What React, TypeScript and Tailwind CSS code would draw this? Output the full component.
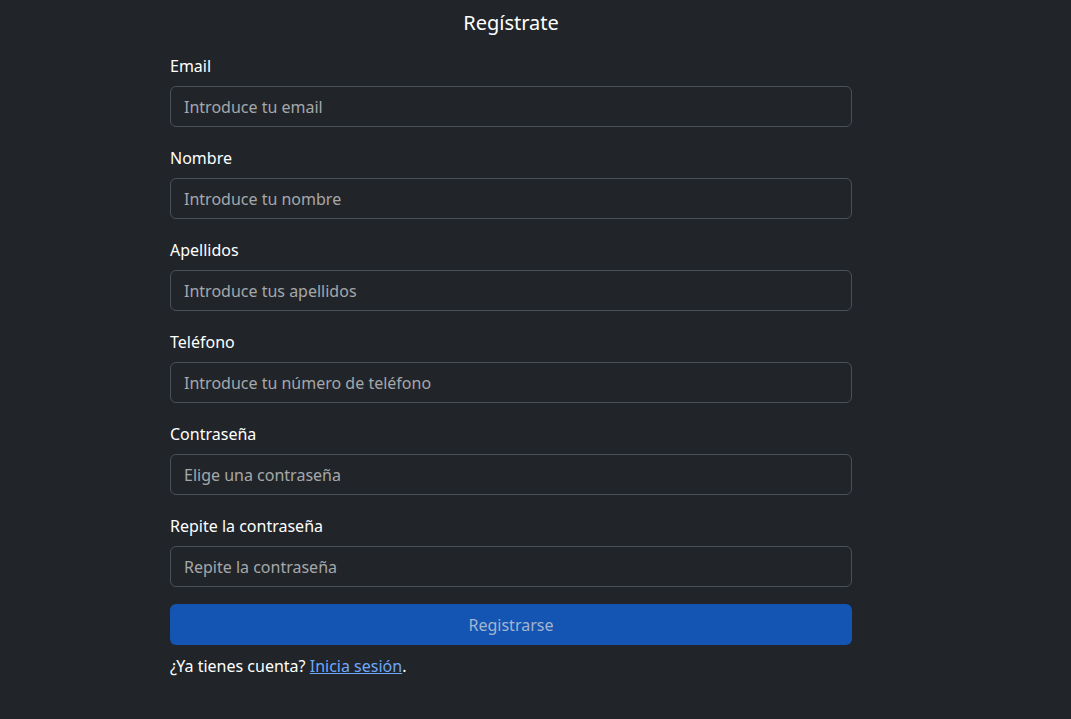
import { useState } from 'react'

const fields = [
  { id: 'email', label: 'Email', type: 'email', placeholder: 'Introduce tu email' },
  { id: 'nombre', label: 'Nombre', type: 'text', placeholder: 'Introduce tu nombre' },
  { id: 'apellidos', label: 'Apellidos', type: 'text', placeholder: 'Introduce tus apellidos' },
  { id: 'telefono', label: 'Teléfono', type: 'tel', placeholder: 'Introduce tu número de teléfono' },
  { id: 'password', label: 'Contraseña', type: 'password', placeholder: 'Elige una contraseña' },
  { id: 'password2', label: 'Repite la contraseña', type: 'password', placeholder: 'Repite la contraseña' },
]

export default function App() {
  const [values, setValues] = useState<Record<string, string>>({})
  const filled = fields.every((f) => values[f.id])

  return (
    <div
      className="min-h-screen bg-[#212529] text-[#f8f9fa]"
      style={{ fontFamily: '"Noto Sans", "Open Sans", sans-serif' }}
    >
      <div className="ml-[170px] w-[682px] pt-[8px]">
        <h2 className="text-center text-[20px] leading-[30px] text-white">Regístrate</h2>

        <form className="mt-[16px]" onSubmit={(e) => e.preventDefault()}>
          {fields.map((f) => (
            <div key={f.id} className="mb-[19px]">
              <label htmlFor={f.id} className="block text-[16px] leading-[24px] mb-[8px] text-white">
                {f.label}
              </label>
              <input
                id={f.id}
                type={f.type}
                placeholder={f.placeholder}
                value={values[f.id] ?? ''}
                onChange={(e) => setValues({ ...values, [f.id]: e.target.value })}
                className="block w-full h-[41px] rounded-[6px] border border-[#495057] bg-[#212529] px-[13px] text-[16px] text-[#dee2e6] placeholder:text-[#a5a8ab] focus:outline-none"
              />
            </div>
          ))}

          <button
            type="submit"
            disabled={!filled}
            className="-mt-[2px] block w-full h-[41px] rounded-[6px] bg-[#1454b2] text-[16px] text-[#a3b5cf] disabled:cursor-default"
          >
            Registrarse
          </button>
        </form>

        <p className="mt-[9px] text-[16px] leading-[24px] text-white">
          ¿Ya tienes cuenta?{' '}
          <a href="#" className="text-[#6ea8fe] underline">
            Inicia sesión
          </a>
          .
        </p>
      </div>
    </div>
  )
}
